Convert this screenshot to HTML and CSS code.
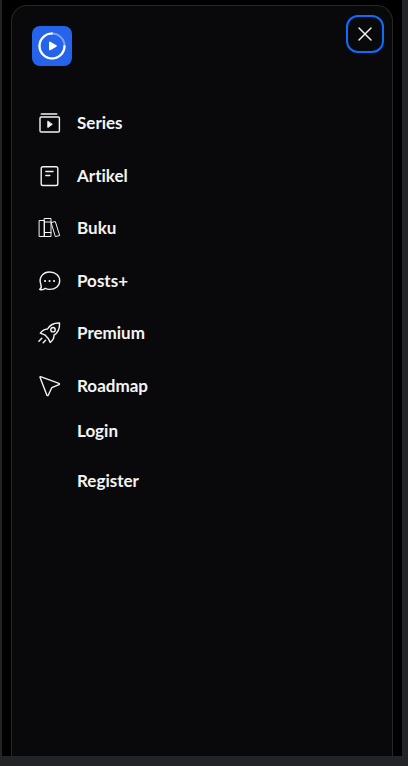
FILE: index.html
```
<!DOCTYPE html>
<html lang="id">
<head>
<meta charset="utf-8">
<meta name="viewport" content="width=device-width, initial-scale=1">
<title>Menu</title>
<link rel="stylesheet" href="styles.css">
</head>
<body>
<div class="screen">
  <aside class="panel">
    <header class="panel-header">
      <a class="logo" href="#" aria-label="Home">
        <svg viewBox="0 0 40 40" fill="none">
          <circle cx="20" cy="20" r="12.5" stroke="#7ea2f5" stroke-width="2"/>
          <path d="M20 7.5A12.5 12.5 0 1 0 32.5 20" stroke="#fff" stroke-width="2.2" stroke-linecap="round"/>
          <path d="M17 16.4v7.2c0 .7.7 1 1.3.7l6.1-3.6c.6-.3.6-1.1 0-1.4l-6.1-3.6c-.6-.3-1.3 0-1.3.7Z" fill="#fff"/>
        </svg>
      </a>
      <button class="close" type="button" aria-label="Close">
        <svg viewBox="0 0 24 24" fill="none" stroke="currentColor" stroke-width="1.5" stroke-linecap="round"><path d="M6 6l12 12M18 6L6 18"/></svg>
      </button>
    </header>
    <nav>
      <ul class="menu">
        <li><a class="item" href="#">
          <svg class="icon" viewBox="0 0 24 24"><path d="M3.5 3h15" stroke="#b9babb" stroke-width="2"/><rect x="2" y="6" width="19.4" height="15" rx="1.3"/><path d="M9.8 10.5v6l4.2-3Z" fill="currentColor" stroke-width="1"/></svg>
          Series</a></li>
        <li><a class="item" href="#">
          <svg class="icon" viewBox="0 0 24 24"><rect x="3.2" y="2.7" width="16.6" height="18.8" rx="1.8"/><path d="M7.8 7.5h7.2M7.8 11.5h4"/></svg>
          Artikel</a></li>
        <li><a class="item" href="#">
          <svg class="icon thin" viewBox="0 0 24 24"><path d="M1.5 4.5h5v16h-5ZM6.5 2.5h6.5v18H6.5ZM6.5 6H13M6.5 16.5H13M13.5 6.5l3.8-1 4.4 14-4 1Z"/></svg>
          Buku</a></li>
        <li><a class="item" href="#">
          <svg class="icon" viewBox="0 0 24 24"><path d="M1.7 20.3c1.7-1 1.8-3 1.2-4.6C.4 9.2 4.5 3 11.5 3c6.1 0 10.2 3.6 10.2 8.7 0 5-4 8.7-10.2 8.7-1.7 0-3-.4-4.2-1-1.7 1.3-3.7 1.7-5.6.9Z"/><path d="M7 12h.1M11.5 12h.1M16 12h.1" stroke-width="2"/></svg>
          Posts+</a></li>
        <li><a class="item" href="#">
          <svg class="icon" viewBox="0 0 24 24"><path d="M21.5 2c-5.5-.2-9.3 1.4-12 6-3.2.2-5.3 1.6-7.2 4.2l4.5 1.6 3.4 3.6 2 4c2.8-2.2 3.9-4.5 3.8-7.3C20.6 11.2 21.8 7.6 21.5 2ZM3.8 17.2l-2.9 3M7.6 19.2l-2.4 2.5"/><circle cx="15" cy="8.7" r="2.2"/></svg>
          Premium</a></li>
        <li><a class="item" href="#">
          <svg class="icon" viewBox="0 0 24 24"><path d="M2.5 2.7 21 9.3c.7.2.7 1 0 1.3l-7.2 3.1-3.6 7.5c-.3.6-1 .6-1.3 0L2 3.2c-.1-.4.2-.6.5-.5Z"/></svg>
          Roadmap</a></li>
      </ul>
      <ul class="account">
        <li><a class="item" href="#">Login</a></li>
        <li><a class="item" href="#">Register</a></li>
      </ul>
    </nav>
  </aside>
</div>
</body>
</html>
```
FILE: styles.css
```
* { box-sizing: border-box; }
body {
  margin: 0;
  background: #232428;
  color: #f4f4f5;
  font-family: Lato, "Liberation Sans", sans-serif;
}
.screen {
  display: flex;
  min-height: 100vh;
  padding: 5px 9px 0;
  background: #000;
  border: solid #232428;
  border-width: 0 6px 10px 2px;
}
.panel {
  flex: 1;
  padding: 9px 8px 20px 20px;
  background: #09090b;
  border: 1px solid #27272a;
  border-bottom: 0;
  border-radius: 16px 16px 0 0;
}
.panel-header {
  display: flex;
  justify-content: space-between;
  align-items: flex-start;
}
.logo {
  width: 40px;
  height: 40px;
  margin-top: 11px;
  border-radius: 8px;
  background: #2563eb;
}
.logo svg { display: block; }
.close {
  display: grid;
  place-items: center;
  width: 38px;
  height: 38px;
  padding: 0;
  border: 2px solid #0d6efd;
  border-radius: 12px;
  background: transparent;
  color: #ededed;
}
.close svg { width: 24px; height: 24px; }
ul { margin: 0; padding: 0; list-style: none; }
.menu {
  display: flex;
  flex-direction: column;
  justify-content: space-between;
  min-height: 287px;
  margin-top: 45px;
  padding-left: 6px;
}
.account {
  display: grid;
  gap: 26px;
  margin-top: 21px;
  padding-left: 45px;
}
.item {
  display: flex;
  align-items: center;
  gap: 15px;
  color: inherit;
  font-size: 17px;
  font-weight: 700;
  font-variant-ligatures: none;
  line-height: 24px;
  text-decoration: none;
}
.icon {
  width: 24px;
  height: 24px;
  fill: none;
  stroke: currentColor;
  stroke-width: 1.4;
  stroke-linecap: round;
  stroke-linejoin: round;
}
.thin { stroke-width: 1; }
```
